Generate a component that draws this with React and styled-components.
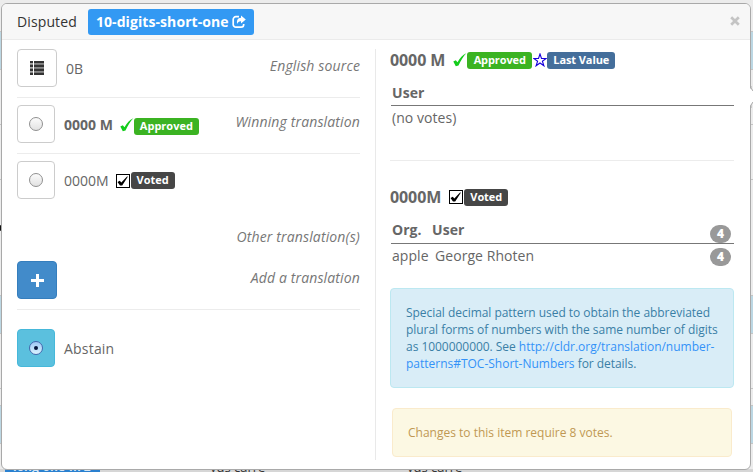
import React from "react";
import styled, { createGlobalStyle } from "styled-components";

const Global = createGlobalStyle`
  * { box-sizing: border-box; }
  html, body { margin: 0; overflow: hidden; }
  body { font-family: "Open Sans", sans-serif; font-size: 14px; line-height: 20px; color: #666; }
`;

const Page = styled.div`
  position: relative;
  width: 753px;
  height: 472px;
  overflow: hidden;
  background: #ececec;
`;

const Backdrop = styled.div`
  display: flex;
  flex-direction: column;
  height: 472px;
`;

const Band = styled.div`
  flex: none;
  height: ${(p) => p.$h}px;
  background: ${(p) => (p.$blue ? "#bcd7e3" : p.$shade ? "#d6d6d6" : "#ececec")};
  border-top: 1px solid ${(p) => (p.$plain ? "transparent" : "#c4c4c4")};
`;

const Peek = styled.div`
  position: absolute;
  left: 5px;
  top: 457px;
  display: grid;
  grid-template-columns: 205px 197px 197px auto;
  font-size: 13px;
  line-height: 20px;
  color: #333;
`;

const PeekButton = styled.span`
  justify-self: start;
  width: 95px;
  padding-left: 8px;
  background: #2a80cf;
  color: #d5e6f5;
  font-size: 12px;
  font-weight: 700;
  white-space: nowrap;
`;

const Notch = styled.svg`
  position: absolute;
  left: 750px;
  top: 86px;
`;

const Mark = styled.div`
  position: absolute;
  left: -3px;
  top: 225px;
  width: 5px;
  height: 6px;
  border-radius: 3px;
  background: #111;
`;

const Dialog = styled.section`
  position: absolute;
  left: 1px;
  top: 3px;
  width: 750px;
  height: 467px;
  display: flex;
  flex-direction: column;
  overflow: hidden;
  background: #fff;
  border: 1px solid #a9a9a9;
  border-radius: 6px;
`;

const Header = styled.header`
  flex: none;
  height: 36px;
  display: flex;
  align-items: center;
  padding: 0 10px 0 15px;
  background: #f7f7f7;
  border-bottom: 1px solid #ebebeb;
  color: #333;
  letter-spacing: 0.12px;
`;

const ItemLink = styled.a`
  display: flex;
  align-items: center;
  gap: 3px;
  height: 26px;
  width: 166px;
  margin-left: 11px;
  padding-left: 8px;
  border-radius: 3px;
  background: #3399f3;
  color: #fff;
  font-weight: 700;
  letter-spacing: 0.08px;
  white-space: nowrap;
`;

const Close = styled.button`
  margin-left: auto;
  margin-top: -2px;
  padding: 0;
  border: 0;
  background: none;
  line-height: 0;
`;

const Body = styled.div`
  flex: 1;
  display: grid;
  grid-template-columns: 359px minmax(0, 1fr);
  padding: 9px 16px 9px 15px;
`;

const Choices = styled.div`
  border-right: 1px solid #e9e9e9;
  padding-right: 15px;
`;

const Choice = styled.div`
  display: flex;
  align-items: flex-start;
  height: ${(p) => p.$h || 56}px;
  padding-top: ${(p) => p.$pt ?? 8}px;
  border-bottom: ${(p) => (p.$line ? "1px solid #ececec" : "0")};
`;

const tones = {
  plain: ["#fff", "#ccc"],
  primary: ["#428bca", "#357ebd"],
  info: ["#5bc0de", "#46b8da"],
};

const Square = styled.button`
  flex: none;
  width: ${(p) => p.$w || 38}px;
  height: 38px;
  display: flex;
  align-items: center;
  justify-content: center;
  padding: 0;
  border: 1px solid ${(p) => tones[p.$tone || "plain"][1]};
  border-radius: 4px;
  background: ${(p) => tones[p.$tone || "plain"][0]};
`;

const Radio = styled.span`
  width: 14px;
  height: 14px;
  display: flex;
  align-items: center;
  justify-content: center;
  border: 1px solid ${(p) => (p.$on ? "#4468ad" : "#909090")};
  border-radius: 50%;
  background: ${(p) => (p.$on ? "linear-gradient(#9fc8f5, #d9f3ff)" : "linear-gradient(#fbfbfb, #e2e2e2)")};
  &::after {
    content: "";
    width: 4px;
    height: 4px;
    border-radius: 50%;
    background: ${(p) => (p.$on ? "#06163b" : "transparent")};
  }
`;

const Value = styled.div`
  display: flex;
  align-items: center;
  height: 20px;
  margin: 10px 0 0 9px;
  font-weight: ${(p) => (p.$bold ? 700 : 400)};
  letter-spacing: ${(p) => p.$track || 0}px;
`;

const Caption = styled.em`
  margin-left: auto;
  margin-top: ${(p) => p.$top ?? 7}px;
  color: #777;
  letter-spacing: 0.14px;
`;

const Tag = styled.span`
  display: flex;
  align-items: center;
  justify-content: center;
  width: ${(p) => p.$w}px;
  height: 17px;
  padding-bottom: 1px;
  border-radius: 3px;
  background: ${(p) => p.$bg};
  color: #fff;
  font-size: 11px;
  font-weight: 700;
  line-height: 15px;
  white-space: nowrap;
  position: relative;
  top: ${(p) => p.$drop || 0}px;
`;

const Glyph = styled.svg`
  flex: none;
  display: block;
  margin: 0 ${(p) => p.$mr ?? 1}px 0 ${(p) => p.$ml || 0}px;
`;

const Details = styled.div`
  padding-left: 14px;
`;

const Candidate = styled.article`
  height: ${(p) => p.$h}px;
  padding-top: ${(p) => p.$pt || 0}px;
  border-bottom: ${(p) => (p.$line ? "1px solid #ececec" : "0")};
`;

const Title = styled.h2`
  display: flex;
  align-items: center;
  height: 22px;
  margin: 0;
  font-size: 16px;
  font-weight: 700;
  letter-spacing: -0.1px;
`;

const Votes = styled.div`
  margin: 11px 0 0 1px;
`;

const VoteRow = styled.div`
  display: flex;
  align-items: center;
  height: ${(p) => (p.$tall ? 25 : 24)}px;
  padding: 0 3px ${(p) => (p.$tall ? 2 : 1)}px 1px;
  font-weight: ${(p) => (p.$head ? 700 : 400)};
  letter-spacing: 0.06px;
  border-bottom: ${(p) => (p.$head ? "1px solid #777" : "0")};
`;

const Org = styled.span`
  width: ${(p) => p.$w}px;
`;

const Count = styled.span`
  margin-left: auto;
  width: 21px;
  height: 18px;
  border-radius: 9px;
  background: #999;
  color: #fff;
  font-size: 12px;
  font-weight: 800;
  line-height: 18px;
  text-align: center;
  position: relative;
  top: ${(p) => p.$drop || 0}px;
`;

const Note = styled.p`
  height: ${(p) => p.$h}px;
  margin: ${(p) => p.$m};
  padding: 15px;
  border: 1px solid ${(p) => (p.$warn ? "#faebcc" : "#bce8f1")};
  border-radius: 4px;
  background: ${(p) => (p.$warn ? "#fcf8e3" : "#d9edf7")};
  color: ${(p) => (p.$warn ? "#c09853" : "#3a7fa6")};
  font-size: 12px;
  line-height: 17px;
  letter-spacing: ${(p) => (p.$warn ? 0 : -0.04)}px;
  white-space: nowrap;
  a { color: #3392f8; letter-spacing: -0.01px; }
`;

const Check = ({ ml, mr = 0 }) => (
  <Glyph $ml={ml} $mr={mr} width="14" height="14" viewBox="0 0 14 14">
    <path d="M.3 8.600 2.800 7.200 4.500 9.300C7 5 9.500 2 13.300.300 10.300 3.500 7.800 7.500 5.500 12.500L2.800 13.300Z" fill="#14cc1c" />
  </Glyph>
);

const Ballot = ({ ml }) => (
  <Glyph $ml={ml} $mr={1} width="14" height="15" viewBox="0 0 14 15">
    <rect x=".5" y=".5" width="13" height="13" fill="#fff" stroke="#000" />
    <path d="M1.500 8 3.800 6.800l1.500 1.700L11.500 2v1.300L6.200 11.500H4Z" fill="#000" />
  </Glyph>
);

const Star = () => (
  <Glyph $ml={1} $mr={0} width="14" height="14" viewBox="0 0 14 14">
    <path d="M7 1 8.500 5.500h4.700L9.400 8.200l1.500 4.600L7 10l-3.900 2.800 1.500-4.600L.8 5.500h4.700Z" fill="none" stroke="#1700dc" strokeWidth="1.100" />
  </Glyph>
);

const Share = () => (
  <svg width="14" height="14" viewBox="0 0 14 14" fill="none">
    <path d="M7 1.700H4A2.700 2.700 0 0 0 1.200 4.500v5A2.700 2.700 0 0 0 4 12.200h5a2.700 2.700 0 0 0 2.700-2.700V9" stroke="#fff" strokeWidth="1.700" />
    <path d="M9 .5 13.800 4.500 9 8.500V6.200C7 6.100 6 6.900 5.200 8.900 4.300 5.500 5.800 3 9 2.800Z" fill="#fff" />
  </svg>
);

const ListIcon = () => (
  <svg width="14" height="14" viewBox="0 0 14 14" shapeRendering="crispEdges">
    {[0, 4, 8, 12].map((y) => (
      <g key={y} fill="#333">
        <rect x="0" y={y} width="3" height="2" />
        <rect x="4" y={y} width="10" height="2" />
        <rect x="0" y={y + 2} width="3" height="1" fill="#aaa" />
        <rect x="4" y={y + 2} width="10" height="1" fill="#888" />
        <rect x="0" y={y + 3} width="3" height="1" fill="#888" />
        <rect x="4" y={y + 3} width="10" height="1" fill="#777" />
      </g>
    ))}
  </svg>
);

const bands = [
  { h: 31, plain: true },
  { h: 38, blue: true },
  { h: 55 },
  { h: 55 },
  { h: 116 },
  { h: 38, blue: true },
  { h: 55 },
  { h: 17 },
  { h: 38, blue: true },
  { h: 26 },
  { h: 3, shade: true, plain: true },
];

export default function App() {
  return (
    <Page>
      <Global />
      <Backdrop>
        {bands.map((b, i) => <Band key={i} $h={b.h} $blue={b.blue} $shade={b.shade} $plain={b.plain} />)}
      </Backdrop>
      <Peek>
        <PeekButton>long-one-m 2</PeekButton>
        <span>yds carre</span><span>yds carre</span><span>–</span>
      </Peek>
      <Mark />
      <Dialog>
        <Header>
          Disputed
          <ItemLink>10-digits-short-one<Share /></ItemLink>
          <Close aria-label="Close">
            <svg width="10" height="10" viewBox="0 0 10 10">
              <path d="m1.200 1.200 7.600 7.600m0-7.600-7.600 7.600" stroke="#c4c4c4" strokeWidth="2.700" />
            </svg>
          </Close>
        </Header>
        <Body>
          <Choices>
            <Choice $pt={0} $h={49} $line>
              <Square $w={40}><ListIcon /></Square>
              <Value>0B</Value>
              <Caption>English source</Caption>
            </Choice>
            <Choice $pt={7} $line>
              <Square><Radio /></Square>
              <Value $bold>0000 M<Check ml={7} /><Tag $w={65} $bg="#3bb322" $drop={1}>Approved</Tag></Value>
              <Caption>Winning translation</Caption>
            </Choice>
            <Choice $pt={7} $h={73}>
              <Square><Radio /></Square>
              <Value>0000M<Ballot ml={7} /><Tag $w={44} $bg="#464646" $drop={-1}>Voted</Tag></Value>
            </Choice>
            <Choice $pt={0} $h={34}>
              <Caption $top={0}>Other translation(s)</Caption>
            </Choice>
            <Choice $pt={0} $h={49} $line>
              <Square $w={40} $tone="primary">
                <svg width="13" height="13"><path d="M6.500 0v13M0 6.500h13" stroke="#fff" strokeWidth="3" /></svg>
              </Square>
              <Caption>Add a translation</Caption>
            </Choice>
            <Choice $pt={19} $h={70}>
              <Square $tone="info"><Radio $on /></Square>
              <Value $track={0.2}>Abstain</Value>
            </Choice>
          </Choices>
          <Details>
            <Candidate $h={112} $line>
              <Title>0000 M<Check ml={8} /><Tag $w={65} $bg="#3bb322">Approved</Tag><Star /><Tag $w={68} $bg="#446e9b">Last Value</Tag></Title>
              <Votes>
                <VoteRow $head>User</VoteRow>
                <VoteRow>(no votes)</VoteRow>
              </Votes>
            </Candidate>
            <Candidate $h={127} $pt={25}>
              <Title>0000M<Ballot ml={8} /><Tag $w={44} $bg="#464646">Voted</Tag></Title>
              <Votes>
                <VoteRow $head $tall><Org $w={40}>Org.</Org>User<Count $drop={4}>4</Count></VoteRow>
                <VoteRow><Org $w={43}>apple</Org>George Rhoten<Count $drop={1}>4</Count></VoteRow>
              </Votes>
            </Candidate>
            <Note $h={100} $m="0">
              Special decimal pattern used to obtain the abbreviated<br />
              plural forms of numbers with the same number of digits<br />
              as 1000000000. See <a>http://cldr.org/translation/number-<br />patterns#TOC-Short-Numbers</a> for details.
            </Note>
            <Note $warn $h={49} $m="20px 2px 0">Changes to this item require 8 votes.</Note>
          </Details>
        </Body>
      </Dialog>
      <Notch width="3" height="22" viewBox="0 0 3 22">
        <path d="M0 2 3 5v11L0 20Z" fill="#fff" />
        <path d="M1 0v2l2 3M3 16l-2 3v3" fill="none" stroke="#a9a9a9" />
      </Notch>
    </Page>
  );
}
